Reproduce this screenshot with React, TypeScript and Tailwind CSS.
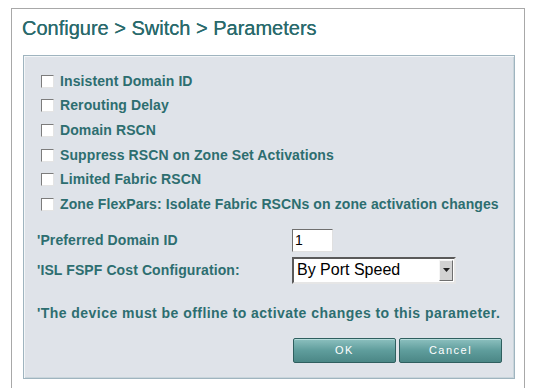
import React from 'react';

const options = [
  'Insistent Domain ID',
  'Rerouting Delay',
  'Domain RSCN',
  'Suppress RSCN on Zone Set Activations',
  'Limited Fabric RSCN',
  'Zone FlexPars: Isolate Fabric RSCNs on zone activation changes',
];

const CheckRow: React.FC<{ label: string }> = ({ label }) => (
  <div className="flex items-center h-[24.6px]">
    <span className="w-[13px] h-[13px] bg-white border border-t-[#7c7c7c] border-l-[#7c7c7c] border-r-[#e4e4e4] border-b-[#e4e4e4] shrink-0" />
    <span className="ml-[6px] text-[14px] font-bold text-[#2d6e70] tracking-[0.1px] whitespace-nowrap">{label}</span>
  </div>
);

const App: React.FC = () => {
  return (
    <div className="w-[534px] h-[388px] bg-white overflow-hidden font-['Liberation_Sans',Arial,sans-serif]">
      <div className="ml-[11px] pt-[8px]">
        <div className="w-[514px] h-[400px] border border-b-0 border-[#a8a8a8] bg-white">
          <h1 className="ml-[10px] mt-[7px] text-[20px] leading-[24px] text-[#2a6a6c] [text-shadow:0_0_0.4px_#2a6a6c]">
            Configure &gt; Switch &gt; Parameters
          </h1>
          <div className="ml-[11px] mt-[15px] w-[492px] h-[324px] bg-[#dfe3e9] border border-[#9fb4bf] shadow-[inset_1px_1px_0_#f3f6f8,inset_-1px_-1px_0_#c9d5db]">
            <div className="pl-[17px] pt-[13px]">
              {options.map((o) => (
                <CheckRow key={o} label={o} />
              ))}
            </div>
            <div className="pl-[13px] mt-[12px] flex flex-col gap-[5px]">
              <div className="flex items-center">
                <span className="w-[255px] text-[14px] font-bold text-[#2d6e70] tracking-[0.1px]">'Preferred Domain ID</span>
                <div className="w-[41px] h-[23px] bg-white border border-t-[#6f6f6f] border-l-[#6f6f6f] border-r-[#e0e0e0] border-b-[#e0e0e0] text-[14px] leading-[21px] pl-[2px] text-black">
                  1
                </div>
              </div>
              <div className="flex items-center">
                <span className="w-[255px] text-[14px] font-bold text-[#2d6e70] tracking-[0.1px]">'ISL FSPF Cost Configuration:</span>
                <div className="w-[164px] h-[27px] bg-white border-2 border-t-[#5a5a5a] border-l-[#5a5a5a] border-r-[#e6e6e6] border-b-[#e6e6e6] flex items-center justify-between">
                  <span className="text-[16px] pl-[3px] text-black">By Port Speed</span>
                  <span className="w-[14px] h-[21px] mr-[1px] bg-[#d2d2d2] border border-t-[#f5f5f5] border-l-[#f5f5f5] border-r-[#6f6f6f] border-b-[#6f6f6f] flex items-center justify-center">
                    <svg width="7" height="4" viewBox="0 0 7 4"><path d="M0 0h7L3.5 4z" fill="#222" /></svg>
                  </span>
                </div>
              </div>
            </div>
            <p className="pl-[13px] mt-[19px] text-[14px] font-bold text-[#2d6e70] tracking-[0.45px] whitespace-nowrap">
              'The device must be offline to activate changes to this parameter.
            </p>
            <div className="flex justify-end gap-[3px] pr-[12px] mt-[14px]">
              <button className="w-[103px] h-[25px] rounded-[2px] border border-[#2f5f5f] bg-gradient-to-b from-[#8cc0bf] via-[#5f9d9c] to-[#4b8786] text-white text-[11px] tracking-[1.5px] shadow-[inset_0_1px_0_#b5dcdb]">
                OK
              </button>
              <button className="w-[103px] h-[25px] rounded-[2px] border border-[#2f5f5f] bg-gradient-to-b from-[#8cc0bf] via-[#5f9d9c] to-[#4b8786] text-white text-[11px] tracking-[1.5px] shadow-[inset_0_1px_0_#b5dcdb]">
                Cancel
              </button>
            </div>
          </div>
        </div>
      </div>
    </div>
  );
};

export default App;
